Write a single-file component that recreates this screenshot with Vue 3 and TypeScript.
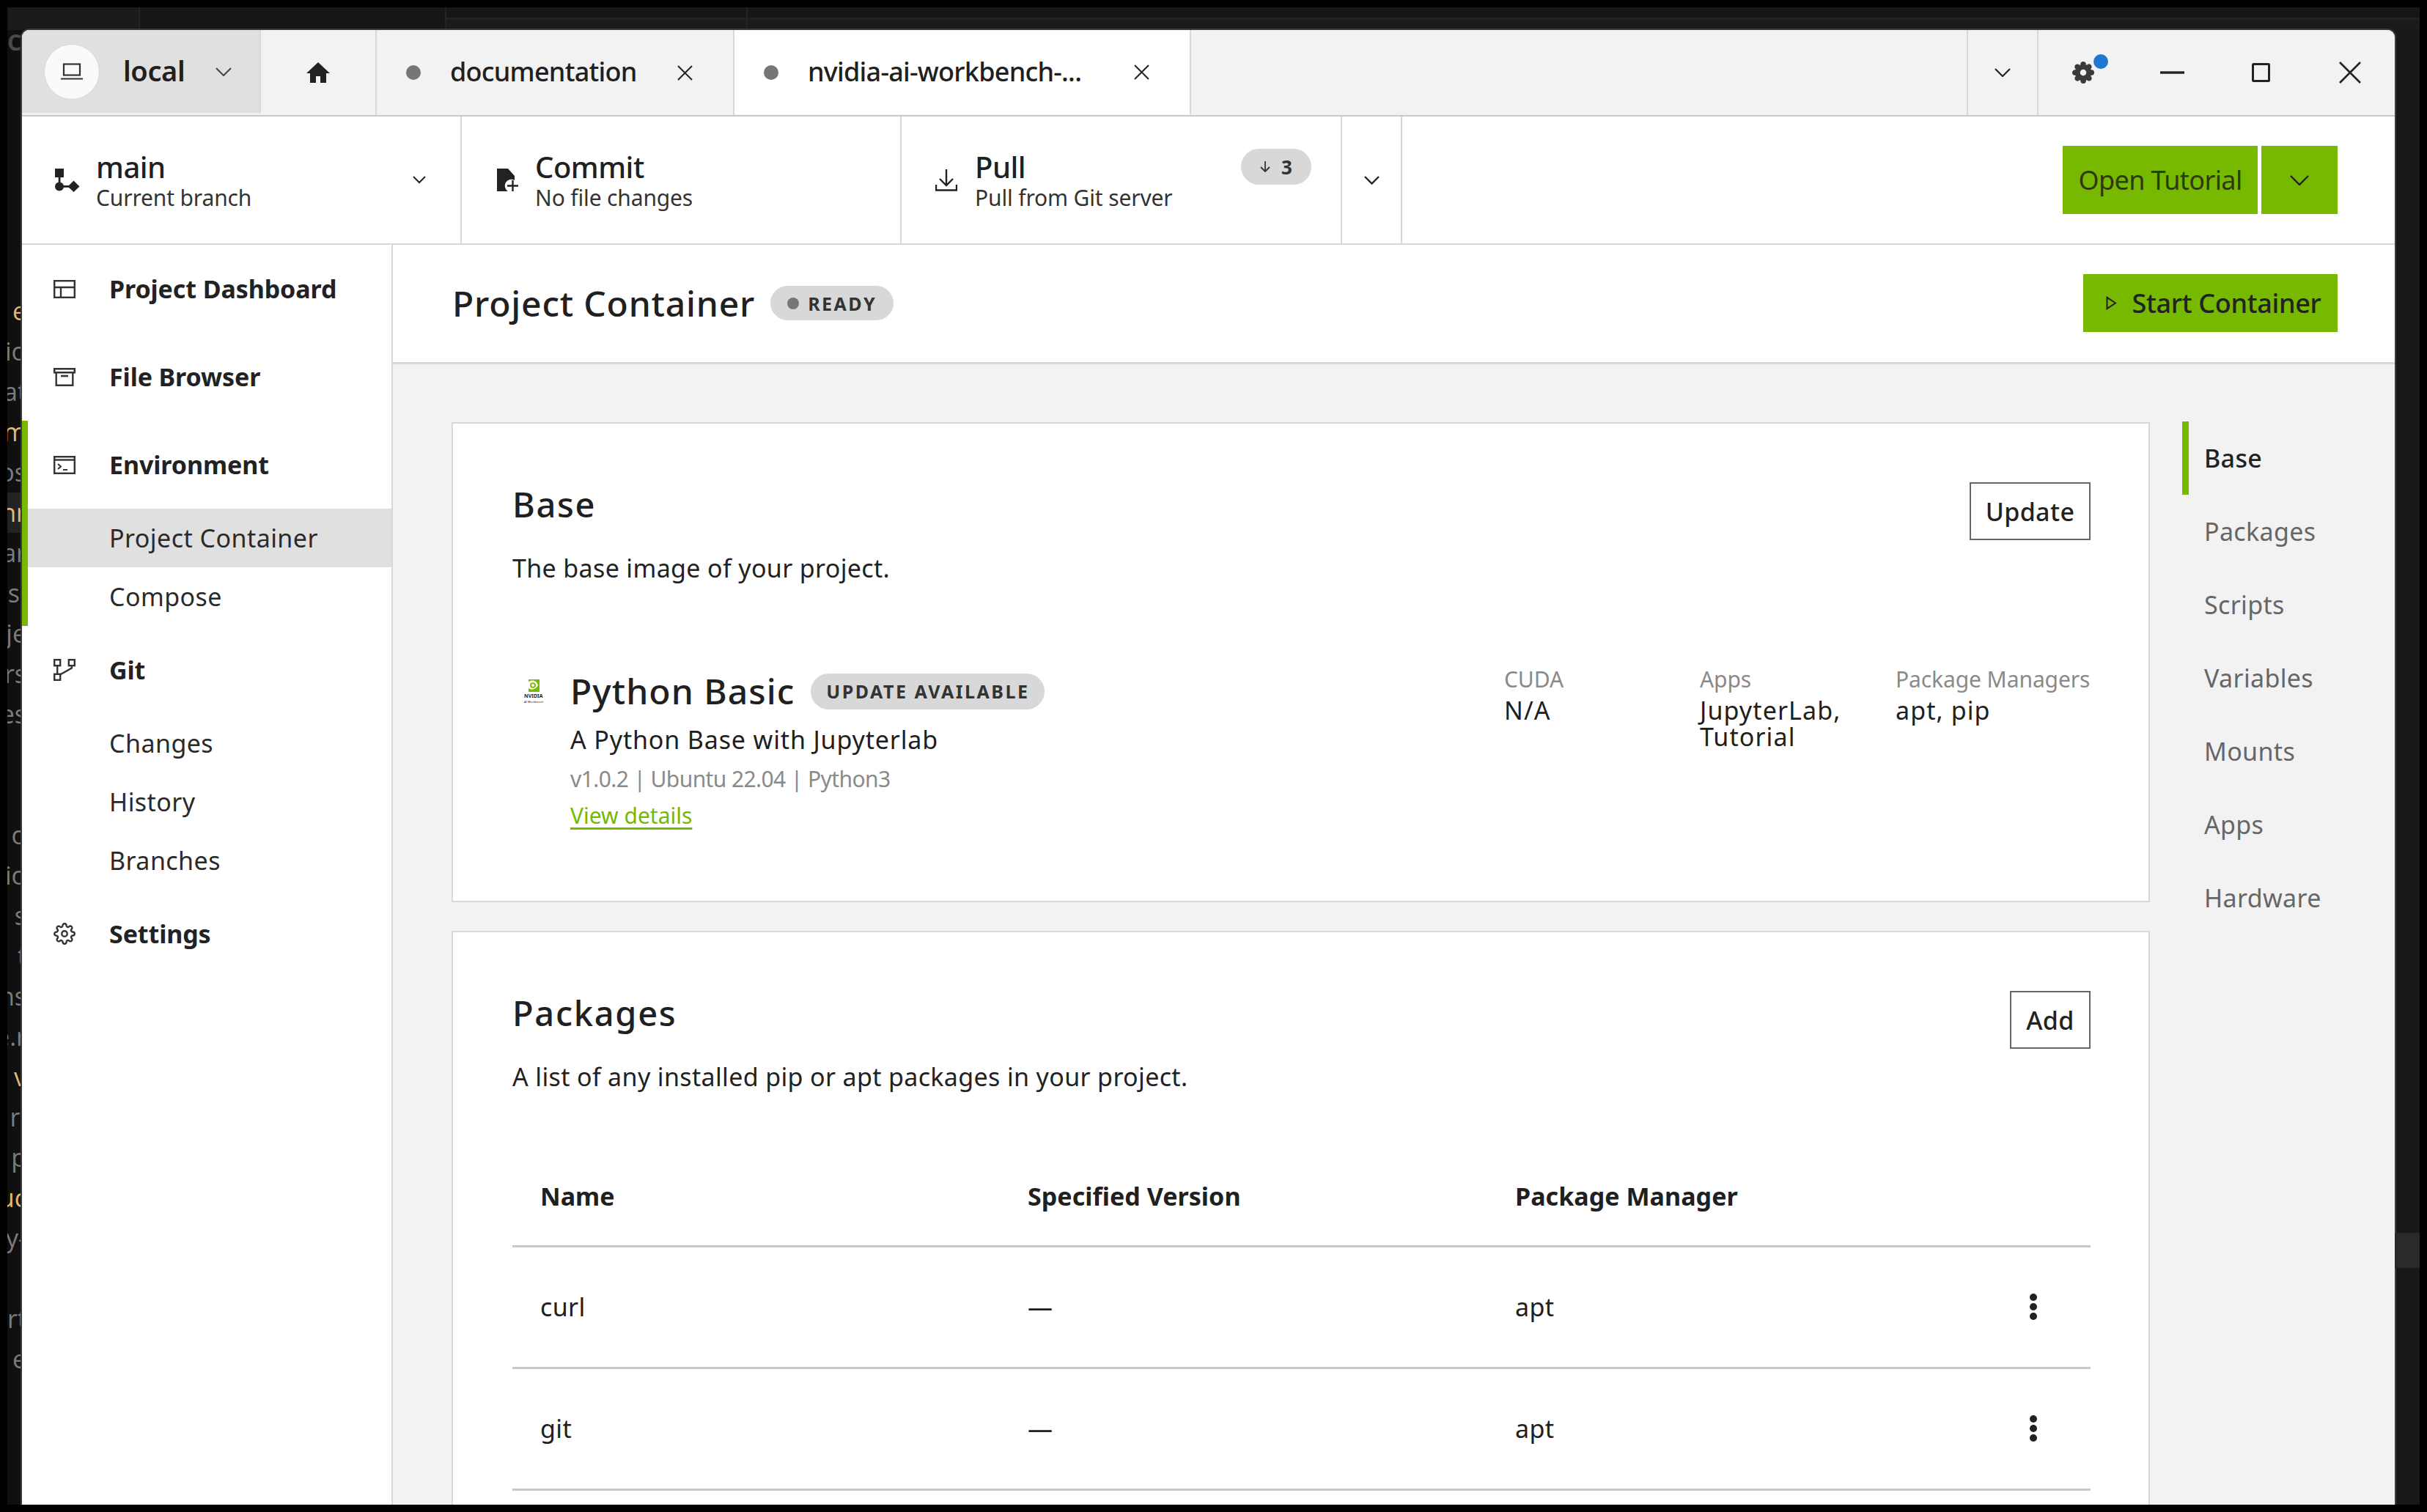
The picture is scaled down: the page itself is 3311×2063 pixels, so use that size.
<script setup lang="ts">
interface StripLine { text: string; tone?: string }
const stripLines: StripLine[] = [
  { text: 'e', tone: 'warm' }, { text: 'tio' }, { text: 'at' }, { text: 'm', tone: 'warm' }, { text: 'os' },
  { text: 'nr', tone: 'warm' }, { text: 'ar' }, { text: 's.' }, { text: 'je' }, { text: 'rs' }, { text: 'es' },
  { text: '' }, { text: '' }, { text: 'o' }, { text: 'io' }, { text: 's' }, { text: 't' }, { text: 'ns' },
  { text: 'e.r' }, { text: 'v', tone: 'warm' }, { text: 'ri' }, { text: 'p' }, { text: 'uc', tone: 'warm' },
  { text: 'y-' }, { text: '' }, { text: 'rt' }, { text: 'e' }
]
const gitItems = ['Changes', 'History', 'Branches']
const rightNav = ['Base', 'Packages', 'Scripts', 'Variables', 'Mounts', 'Apps', 'Hardware']
const packages = [
  { name: 'curl', version: '—', manager: 'apt' },
  { name: 'git', version: '—', manager: 'apt' }
]
const gearPath = 'M19.4 15a1.65 1.65 0 0 0 .33 1.82l.06.06a2 2 0 0 1 0 2.83 2 2 0 0 1-2.83 0l-.06-.06a1.65 1.65 0 0 0-1.82-.33 1.65 1.65 0 0 0-1 1.51V21a2 2 0 0 1-2 2 2 2 0 0 1-2-2v-.09A1.65 1.65 0 0 0 9 19.4a1.65 1.65 0 0 0-1.82.33l-.06.06a2 2 0 0 1-2.83 0 2 2 0 0 1 0-2.83l.06-.06a1.65 1.65 0 0 0 .33-1.82 1.65 1.65 0 0 0-1.51-1H3a2 2 0 0 1-2-2 2 2 0 0 1 2-2h.09A1.65 1.65 0 0 0 4.6 9a1.65 1.65 0 0 0-.33-1.82l-.06-.06a2 2 0 0 1 0-2.83 2 2 0 0 1 2.83 0l.06.06a1.65 1.65 0 0 0 1.82.33H9a1.65 1.65 0 0 0 1-1.51V3a2 2 0 0 1 2-2 2 2 0 0 1 2 2v.09a1.65 1.65 0 0 0 1 1.51 1.65 1.65 0 0 0 1.82-.33l.06-.06a2 2 0 0 1 2.83 0 2 2 0 0 1 0 2.83l-.06.06a1.65 1.65 0 0 0-.33 1.82V9a1.65 1.65 0 0 0 1.51 1H21a2 2 0 0 1 2 2 2 2 0 0 1-2 2h-.09a1.65 1.65 0 0 0-1.51 1z'
</script>

<template>
  <div class="screen">
    <div class="desktop">
      <div class="top-strip">
        <div class="top-cell c1"></div>
        <div class="top-cell c2"></div>
        <div class="top-cell c3"></div>
        <div class="top-cell c4"></div>
      </div>
      <div class="desk-body">
        <div class="left-strip">
          <div class="strip-head">CH</div>
          <div v-for="(l, i) in stripLines" :key="i" class="strip-line" :class="[l.tone, { hl: i === 5 }]"><span>{{ l.text }}</span></div>
          <div class="strip-foot"></div>
        </div>

        <main class="window">
          <header class="tabbar">
            <div class="local">
              <div class="avatar">
                <svg width="30" height="23" viewBox="0 0 30 23" fill="none" stroke="#333" stroke-width="2.2"><rect x="4" y="1.5" width="22" height="15"/><path d="M0 21.5h30"/></svg>
              </div>
              <span class="local-name">local</span>
              <svg class="chev-local" width="22" height="12" viewBox="0 0 22 12" fill="none" stroke="#444" stroke-width="2"><path d="M1 1l10 10L21 1"/></svg>
            </div>
            <div class="home">
              <svg width="32" height="28" viewBox="0 0 32 28" fill="#222"><path d="M16 0L0 15h5v13h8v-9h6v9h8V15h5z"/></svg>
            </div>
            <div class="tab">
              <span class="dot"></span><span class="tab-name">documentation</span>
              <svg class="tab-x" width="21" height="21" viewBox="0 0 21 21" stroke="#222" stroke-width="2"><path d="M1 1l19 19M20 1L1 20"/></svg>
            </div>
            <div class="tab active">
              <span class="dot"></span><span class="tab-name">nvidia-ai-workbench-...</span>
              <svg class="tab-x" width="21" height="21" viewBox="0 0 21 21" stroke="#222" stroke-width="2"><path d="M1 1l19 19M20 1L1 20"/></svg>
            </div>
            <div class="tab-space"></div>
            <div class="tab-more">
              <svg width="22" height="12" viewBox="0 0 22 12" fill="none" stroke="#222" stroke-width="2.2"><path d="M1 1l10 10L21 1"/></svg>
            </div>
            <div class="win-controls">
              <div class="win-cell">
                <span class="gear-wrap">
                  <svg width="30" height="30" viewBox="0 0 24 24" fill="#3a3a3a" fill-rule="evenodd"><path :d="gearPath" stroke="#3a3a3a" stroke-width="2"/><circle cx="12" cy="12" r="3.4" fill="#f2f2f2"/></svg>
                  <span class="notify"></span>
                </span>
              </div>
              <div class="win-cell"><svg width="33" height="4" viewBox="0 0 33 4"><rect width="33" height="3.4" y=".3" fill="#222"/></svg></div>
              <div class="win-cell"><svg width="25" height="26" viewBox="0 0 25 26" fill="none" stroke="#222" stroke-width="3"><rect x="1.5" y="1.5" width="22" height="23" rx="1"/></svg></div>
              <div class="win-cell"><svg width="30" height="30" viewBox="0 0 30 30" stroke="#222" stroke-width="2.6"><path d="M1 1l28 28M29 1L1 29"/></svg></div>
            </div>
          </header>

          <section class="toolbar">
            <div class="tool branch">
              <svg class="tool-icon" width="34" height="32" viewBox="0 0 34 32" fill="#222"><rect width="12" height="12"/><rect x="4.700" y="11" width="2.800" height="14"/><rect x="6" y="23" width="20" height="2.800"/><circle cx="6" cy="24.500" r="6"/><path d="M25.500 16.500l8 8-8 7.500-8-7.500z"/></svg>
              <div class="tool-text"><div class="tool-title">main</div><div class="tool-sub">Current branch</div></div>
              <svg class="tool-chev" width="18" height="11" viewBox="0 0 18 11" fill="none" stroke="#222" stroke-width="2"><path d="M1 1l8 8 8-8"/></svg>
            </div>
            <div class="tool commit">
              <svg class="tool-icon" width="31" height="31" viewBox="0 0 31 31"><path d="M0 0h15l9 10v6a8 8 0 0 0-9 15H0z" fill="#222"/><path d="M21.500 16v15M14 23.500h15" stroke="#222" stroke-width="2.400"/></svg>
              <div class="tool-text"><div class="tool-title">Commit</div><div class="tool-sub">No file changes</div></div>
            </div>
            <div class="tool pull">
              <svg class="tool-icon" width="30" height="30" viewBox="0 0 30 30" fill="none" stroke="#222" stroke-width="2.400"><path d="M15 0v22M6 13l9 9 9-9M1 21v7.500h28V21"/></svg>
              <div class="tool-text"><div class="tool-title">Pull</div><div class="tool-sub">Pull from Git server</div></div>
              <div class="badge">
                <svg width="14" height="15" viewBox="0 0 14 15" fill="none" stroke="#333" stroke-width="1.800"><path d="M7 0v14M1 8l6 6 6-6"/></svg>
                <span>3</span>
              </div>
            </div>
            <div class="tool-more">
              <svg width="21" height="12" viewBox="0 0 21 12" fill="none" stroke="#222" stroke-width="2.400"><path d="M1 1l9.500 9.500L20 1"/></svg>
            </div>
            <div class="tool-actions">
              <button class="btn-green tutorial">Open Tutorial</button>
              <button class="btn-green tutorial-more">
                <svg width="26" height="14" viewBox="0 0 26 14" fill="none" stroke="#222" stroke-width="2.400"><path d="M1 1l12 12L25 1"/></svg>
              </button>
            </div>
          </section>

          <div class="page">
            <nav class="sidebar">
              <a class="nav-item strong">
                <svg width="30" height="25" viewBox="0 0 30 25" fill="none" stroke="#333" stroke-width="2.400"><rect x="1.200" y="1.200" width="27.600" height="22.600"/><path d="M1 10h28M10 10v14"/></svg>
                <span>Project Dashboard</span>
              </a>
              <a class="nav-item strong">
                <svg width="30" height="25" viewBox="0 0 30 25" fill="none" stroke="#333" stroke-width="2.400"><path d="M1.200 1.200h27.600v5H1.200zM3.700 6.200v17.600h22.600V6.200"/><path d="M10 11h10" stroke-width="2.600"/></svg>
                <span>File Browser</span>
              </a>
              <div class="group">
                <a class="nav-item strong">
                  <svg width="30" height="25" viewBox="0 0 30 25" fill="none" stroke="#333" stroke-width="2.400"><rect x="1.200" y="1.200" width="27.600" height="22.600"/><path d="M1 5.500h28"/><path d="M6 11l4 3.500L6 18M13 19h6" stroke-width="2"/></svg>
                  <span>Environment</span>
                </a>
                <a class="nav-item sub selected"><span>Project Container</span></a>
                <a class="nav-item sub"><span>Compose</span></a>
              </div>
              <a class="nav-item strong">
                <svg width="30" height="30" viewBox="0 0 30 30" fill="none" stroke="#333" stroke-width="2.400"><rect x="1.200" y="1.200" width="8" height="8"/><rect x="20.800" y="1.200" width="8" height="8"/><rect x="1.200" y="20.800" width="8" height="8"/><path d="M5.200 9v12M24.800 9v3.500L9 21.500"/></svg>
                <span>Git</span>
              </a>
              <a v-for="g in gitItems" :key="g" class="nav-item sub"><span>{{ g }}</span></a>
              <a class="nav-item strong">
                <svg width="30" height="30" viewBox="0 0 24 24" fill="none" stroke="#333" stroke-width="1.900"><circle cx="12" cy="12" r="3"/><path :d="gearPath"/></svg>
                <span>Settings</span>
              </a>
            </nav>

            <div class="content">
              <div class="content-head">
                <div class="head-left">
                  <h1 class="page-title">Project Container</h1>
                  <span class="chip ready"><i class="chip-dot"></i>READY</span>
                </div>
                <button class="btn-green start">
                  <svg width="15" height="19" viewBox="0 0 15 19" fill="none" stroke="#222" stroke-width="2"><path d="M1.500 1.800v15.400L13 9.500z"/></svg>
                  Start Container
                </button>
              </div>

              <div class="content-body">
                <div class="cards">
                  <section class="card base-card">
                    <div class="card-head">
                      <h2>Base</h2>
                      <button class="btn-outline update-btn">Update</button>
                    </div>
                    <p class="card-desc">The base image of your project.</p>
                    <div class="base-row">
                      <div class="logo">
                        <svg width="15" height="17" viewBox="0 0 15 17"><rect width="15" height="17" fill="#76b900"/><path d="M0 3c5-3 11-2 13 5-3 6-9 7-13 4z" fill="#fff"/><ellipse cx="6" cy="8" rx="4" ry="3.800" fill="#76b900"/><circle cx="6" cy="8" r="2" fill="#fff"/></svg>
                        <div class="logo-name">NVIDIA</div>
                        <div class="logo-sub">AI Workbench</div>
                      </div>
                      <div class="base-info">
                        <div class="base-title"><span>Python Basic</span><span class="chip update">UPDATE AVAILABLE</span></div>
                        <div class="base-desc">A Python Base with Jupyterlab</div>
                        <div class="base-meta">v1.0.2 | Ubuntu 22.04 | Python3</div>
                        <a class="base-link">View details</a>
                      </div>
                      <div class="base-specs">
                        <div class="spec"><div class="spec-label">CUDA</div><div class="spec-value">N/A</div></div>
                        <div class="spec"><div class="spec-label">Apps</div><div class="spec-value">JupyterLab,<br>Tutorial</div></div>
                        <div class="spec"><div class="spec-label">Package Managers</div><div class="spec-value">apt, pip</div></div>
                      </div>
                    </div>
                  </section>

                  <section class="card pkg-card">
                    <div class="card-head">
                      <h2>Packages</h2>
                      <button class="btn-outline add-btn">Add</button>
                    </div>
                    <p class="card-desc">A list of any installed pip or apt packages in your project.</p>
                    <div class="table">
                      <div class="t-row t-head">
                        <div>Name</div><div>Specified Version</div><div>Package Manager</div><div></div>
                      </div>
                      <div v-for="p in packages" :key="p.name" class="t-row">
                        <div>{{ p.name }}</div><div>{{ p.version }}</div><div>{{ p.manager }}</div>
                        <div class="kebab"><i></i><i></i><i></i></div>
                      </div>
                    </div>
                  </section>
                </div>

                <aside class="right-nav">
                  <a v-for="(r, i) in rightNav" :key="r" class="rn-item" :class="{ on: i === 0 }">{{ r }}</a>
                </aside>
              </div>
            </div>
          </div>
        </main>

        <div class="right-strip"><div class="rs-hl"></div></div>
      </div>
    </div>
  </div>
</template>

<style>
html, body { margin: 0; background: #000; }
</style>

<style scoped>
* { box-sizing: border-box; }
.screen {
  width: 3311px; height: 2063px; padding: 10px; background: #000; overflow: hidden;
  font-family: "Noto Sans", Roboto, sans-serif; color: #202020; letter-spacing: 0.35px;
}
.desktop { height: 2043px; display: flex; flex-direction: column; background: #181818; overflow: hidden; }
.top-strip { height: 31px; flex: none; display: flex; background: #1b1b1b; }
.top-cell { border-right: 2px solid #242424; }
.c1 { width: 181px; background: #1a1a1a; }
.c2 { width: 418px; background: #161616; }
.c3 { width: 411px; background: linear-gradient(#161616 14px, #222 14px, #222 17px, #1b1b1b 17px); }
.c4 { flex: 1; border: 0; background: linear-gradient(#161616 14px, #222 14px, #222 17px, #1b1b1b 17px); }
.desk-body { flex: 1; min-height: 0; display: flex; }

.left-strip { width: 20px; flex: none; background: #101010; overflow: hidden; font-family: "Open Sans", sans-serif; font-size: 34px; color: #7c7c7c; letter-spacing: 0; }
.strip-head { height: 356px; font-weight: 700; color: #4a4a4a; font-size: 30px; line-height: 34px; }
.strip-line { height: 55px; line-height: 55px; display: flex; justify-content: flex-end; white-space: nowrap; }
.strip-line span { margin-right: -6px; }
.strip-line.warm { color: #e3b96f; }
.strip-line.hl { background: #232323; }
.strip-foot { height: 6px; margin-top: 191px; background: #7fb3c2; }

.right-strip { width: 34px; flex: none; padding-top: 1641px; }
.rs-hl { height: 48px; background: #2a2a2a; }

.window { flex: 1; min-width: 0; display: flex; flex-direction: column; background: #fff; border-radius: 10px 10px 0 0; box-shadow: 0 0 0 2px #3c3c3c; overflow: hidden; }

/* tab bar */
.tabbar { height: 118px; flex: none; display: flex; background: #f2f2f2; border-bottom: 2.5px solid #c9c9c9; }
.local { width: 326px; flex: none; margin-bottom: 3px; display: flex; align-items: center; padding-left: 30px; background: #e0e0e0; border-right: 2px solid #d8d8d8; }
.avatar { width: 76px; height: 76px; border-radius: 50%; background: #fafafa; border: 1.500px solid #d8d8d8; display: flex; align-items: center; justify-content: center; flex: none; }
.local-name { margin-left: 32px; margin-top: -3px; font-size: 38px; font-weight: 600; letter-spacing: -0.4px; }
.chev-local { margin-left: 42px; }
.home { width: 158px; flex: none; display: flex; align-items: center; justify-content: center; border-right: 2px solid #d8d8d8; }
.tab { width: 488px; flex: none; display: flex; align-items: center; padding: 0 55px 0 40px; border-right: 2px solid #d8d8d8; font-size: 36px; font-weight: 500; letter-spacing: -0.75px; }
.tab.active { width: 623px; background: #fff; margin-bottom: 1px; }
.dot { width: 20px; height: 20px; border-radius: 50%; background: #767676; flex: none; }
.tab-name { margin-left: 40px; margin-top: -3px; white-space: nowrap; }
.tab-x { margin-left: auto; flex: none; }
.tab-space { flex: 1; }
.tab-more { width: 98px; flex: none; display: flex; align-items: center; justify-content: center; border-left: 2px solid #d8d8d8; border-right: 2px solid #d8d8d8; }
.win-controls { width: 486px; flex: none; display: grid; grid-template-columns: repeat(4, 1fr); }
.win-cell { display: flex; align-items: center; justify-content: center; }
.gear-wrap { position: relative; display: flex; }
.notify { position: absolute; left: 29px; top: -10px; width: 20px; height: 20px; border-radius: 50%; background: #1f77d0; }

/* toolbar */
.toolbar { height: 175px; flex: none; display: flex; border-bottom: 2.500px solid #d8d8d8; }
.tool { display: flex; align-items: center; border-right: 2px solid #d8d8d8; flex: none; }
.tool-icon { flex: none; }
.tool-text { margin-top: 7px; }
.tool-title { font-size: 40px; line-height: 42px; font-weight: 500; letter-spacing: -0.5px; }
.tool-sub { font-size: 30px; line-height: 42px; color: #333; letter-spacing: -0.15px; }
.branch { width: 600px; padding: 0 47px 0 45px; }
.branch .tool-text { margin-left: 22px; }
.tool-chev { margin-left: auto; }
.commit { width: 600px; padding-left: 48px; }
.commit .tool-text { margin-left: 21px; }
.pull { width: 601px; padding: 0 40px 0 46px; }
.pull .tool-text { margin-left: 24px; }
.badge { margin-left: auto; align-self: flex-start; margin-top: 44px; height: 49px; width: 96px; border-radius: 25px; background: #d8d8d8; display: flex; align-items: center; justify-content: center; gap: 15px; font-size: 26px; font-weight: 700; color: #333; }
.tool-more { width: 82px; flex: none; display: flex; align-items: center; justify-content: center; border-right: 2px solid #d8d8d8; }
.tool-actions { flex: 1; display: flex; justify-content: flex-end; align-items: flex-start; gap: 5px; padding: 40px 78px 0 0; }
button { font-family: inherit; letter-spacing: inherit; border: 0; padding: 0; margin: 0; }
.btn-green { background: #76b900; color: #222; display: flex; align-items: center; justify-content: center; }
.tutorial { width: 266px; height: 93px; font-size: 36px; color: #2c3a10; letter-spacing: -0.6px; }
.tutorial-more { width: 104px; height: 93px; }

/* sidebar */
.page { flex: 1; min-height: 0; display: flex; }
.sidebar { width: 506px; flex: none; background: #fff; border-right: 2.500px solid #d8d8d8; }
.nav-item { display: flex; align-items: center; padding-left: 43px; color: #222; font-size: 34px; }
.nav-item svg { flex: none; width: 30px; margin-right: 46px; }
.nav-item.strong { height: 120px; font-weight: 700; letter-spacing: -0.1px; }
.nav-item.sub { height: 80px; padding-left: 119px; color: #2a2a2a; letter-spacing: 0.45px; }
.group { border-left: 8px solid #76b900; }
.group .nav-item.strong { padding-left: 35px; }
.group .nav-item.sub { padding-left: 111px; }
.nav-item.selected { background: #e0e0e0; }

/* content */
.content { flex: 1; min-width: 0; display: flex; flex-direction: column; }
.content-head { height: 163px; flex: none; display: flex; align-items: center; justify-content: space-between; padding: 0 78px 1px 81px; border-bottom: 3px solid #d8d8d8; }
.head-left { display: flex; align-items: center; gap: 21px; }
.page-title { margin: 0; font-size: 48px; font-weight: 500; letter-spacing: 0.8px; }
.chip { display: inline-flex; align-items: center; border-radius: 26px; background: #d8d8d8; font-size: 25px; font-weight: 700; letter-spacing: 2.500px; color: #333; }
.ready { height: 47px; padding: 0 23px; gap: 12px; }
.chip-dot { width: 16px; height: 16px; border-radius: 50%; background: #767676; }
.start { width: 347px; height: 79px; gap: 20px; padding-left: 9px; font-size: 36px; font-weight: 500; letter-spacing: -0.3px; }

.content-body { flex: 1; min-height: 0; display: flex; background: #f2f2f2; padding: 79px 0 0 80px; overflow: hidden; }
.cards { width: 2317px; flex: none; display: flex; flex-direction: column; gap: 39px; }
.card { background: #fff; border: 2px solid #d8d8d8; padding: 0 79px 0 81px; flex: none; }
.card-head { display: flex; justify-content: space-between; align-items: flex-start; padding-top: 80px; }
.card-head h2 { margin: 0; font-size: 47px; line-height: 60px; font-weight: 500; letter-spacing: 1.7px; }
.btn-outline { height: 79px; background: #fff; border: 2px solid #666; font-size: 34px; font-weight: 500; color: #222; letter-spacing: 0.4px; }
.update-btn { width: 165px; }
.add-btn { width: 110px; }
.card-desc { margin: 16px 0 0; font-size: 34px; line-height: 44px; color: #222; }

.base-card { padding-bottom: 96px; }
.base-row { display: flex; margin-top: 116px; }
.logo { width: 79px; flex: none; padding: 14px 0 0 16px; display: flex; flex-direction: column; align-items: flex-start; }
.logo svg { margin-left: 6px; }
.logo-name { width: 30px; font-size: 7px; line-height: 9px; font-weight: 700; color: #222; letter-spacing: 0; margin-top: 1px; }
.logo-sub { font-size: 4px; line-height: 6px; color: #222; letter-spacing: 0; margin-top: 1px; }
.base-info { flex: 1; }
.base-title { display: flex; align-items: center; gap: 22px; font-size: 48px; line-height: 60px; font-weight: 500; letter-spacing: 1.05px; }
.update { height: 49px; padding: 0 21px; }
.base-desc { margin-top: 14px; font-size: 34px; line-height: 44px; letter-spacing: 0.85px; }
.base-meta { margin-top: 12px; font-size: 30px; line-height: 40px; color: #8a8a8a; letter-spacing: -0.6px; }
.base-link { display: inline-block; margin-top: 10px; font-size: 30px; line-height: 40px; color: #76b900; letter-spacing: 0; text-decoration: underline; text-decoration-thickness: 3px; text-underline-offset: 5px; }
.base-specs { display: flex; margin-top: -4px; }
.spec { width: 267px; }
.spec:last-child { width: 266px; }
.spec-label { font-size: 30px; line-height: 36px; color: #8a8a8a; white-space: nowrap; letter-spacing: -0.1px; }
.spec-value { margin-top: 6px; font-size: 34px; line-height: 36px; letter-spacing: 1.1px; }

.pkg-card { height: 900px; }
.table { margin-top: 73px; }
.t-row { display: grid; grid-template-columns: 665px 665px 665px 1fr; align-items: center; height: 166px; padding: 0 0 2px 38px; border-bottom: 3px solid #c8c8c8; font-size: 34px; }
.t-head { height: 138px; font-weight: 700; letter-spacing: 0.05px; padding-bottom: 0; }
.kebab { padding-left: 37px; display: flex; flex-direction: column; gap: 3px; }
.kebab i { width: 10px; height: 10px; border-radius: 50%; background: #222; }

.right-nav { margin-left: 44px; margin-top: -1px; width: 270px; flex: none; }
.rn-item { display: flex; align-items: center; height: 100px; padding-left: 21px; font-size: 34px; color: #666; border-left: 9px solid transparent; letter-spacing: 0.35px; }
.rn-item.on { border-left-color: #76b900; color: #222; font-weight: 500; }
</style>
